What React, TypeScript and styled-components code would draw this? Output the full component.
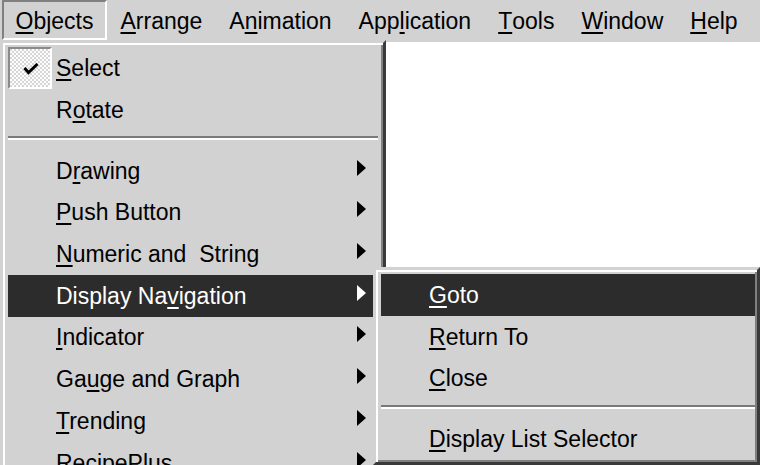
import React from "react";
import styled, { createGlobalStyle } from "styled-components";

const FACE = "#d2d2d2";
const HILITE = "#2c2c2c";

const GlobalStyle = createGlobalStyle`
  html, body {
    margin: 0;
    padding: 0;
    overflow: hidden;
    background: #fff;
  }
  body {
    font-family: "Liberation Sans", Arial, sans-serif;
  }
`;

// a label with its access key underlined, written as "Pre&fix"
const Label = ({ text }: { text: string }) => {
  const at = text.indexOf("&");
  if (at < 0) return <>{text}</>;
  return (
    <>
      {text.slice(0, at)}
      <Key>{text[at + 1]}</Key>
      {text.slice(at + 2)}
    </>
  );
};

type Item =
  | { kind: "item"; label: string; sub?: boolean; checked?: boolean; active?: boolean }
  | { kind: "sep" };

const titles = ["&Objects", "&Arrange", "A&nimation", "App&lication", "&Tools", "&Window", "&Help"];

const objectsMenu: Item[] = [
  { kind: "item", label: "&Select", checked: true },
  { kind: "item", label: "R&otate" },
  { kind: "sep" },
  { kind: "item", label: "D&rawing", sub: true },
  { kind: "item", label: "&Push Button", sub: true },
  { kind: "item", label: "&Numeric and  String", sub: true },
  { kind: "item", label: "Display Na&vigation", sub: true, active: true },
  { kind: "item", label: "&Indicator", sub: true },
  { kind: "item", label: "Ga&uge and Graph", sub: true },
  { kind: "item", label: "&Trending", sub: true },
  { kind: "item", label: "RecipePlus", sub: true },
];

const navigationMenu: Item[] = [
  { kind: "item", label: "&Goto", active: true },
  { kind: "item", label: "&Return To" },
  { kind: "item", label: "&Close" },
  { kind: "sep" },
  { kind: "item", label: "&Display List Selector" },
];

const MenuList = ({ items }: { items: Item[] }) => (
  <>
    {items.map((item, i) =>
      item.kind === "sep" ? (
        <Separator key={i} />
      ) : (
        <Row key={i} $active={!!item.active}>
          <IconCell>
            {item.checked && (
              <CheckBox>
                <svg width="16" height="12" viewBox="0 0 16 12">
                  <polyline
                    points="1.5,5 5.5,9.5 14.5,1"
                    fill="none"
                    stroke="#000"
                    strokeWidth="3"
                  />
                </svg>
              </CheckBox>
            )}
          </IconCell>
          <RowText>
            <Label text={item.label} />
          </RowText>
          <ArrowCell>{item.sub && <Arrow $active={!!item.active} />}</ArrowCell>
        </Row>
      )
    )}
  </>
);

export default function App() {
  return (
    <Screen>
      <GlobalStyle />
      <MenuBar>
        {titles.map((t, i) => (
          <MenuTitle key={t} $pressed={i === 0}>
            <Label text={t} />
          </MenuTitle>
        ))}
      </MenuBar>
      <Workspace />

      <Popup $left={0} $top={40} $width={386} $padRight={5} $padLeft={5}>
        <MenuList items={objectsMenu} />
      </Popup>

      <Popup $left={373} $top={267} $width={387} $padRight={2} $padLeft={5}>
        <MenuList items={navigationMenu} />
      </Popup>
    </Screen>
  );
}

const Screen = styled.div`
  position: relative;
  width: 760px;
  height: 465px;
  overflow: hidden;
  display: flex;
  flex-direction: column;
  background: #fff;
  font-size: 23px;
  color: #000;
`;

const MenuBar = styled.div`
  display: flex;
  align-items: stretch;
  height: 42px;
  padding-left: 2px;
  background: ${FACE};
`;

const MenuTitle = styled.div<{ $pressed: boolean }>`
  display: flex;
  align-items: center;
  padding: 3px 11.5px 0;
  height: 40px;
  box-sizing: border-box;
  border: 2px solid;
  border-color: ${(p) =>
    p.$pressed ? "#808080 #fff #fff #808080" : "transparent"};
  white-space: pre;
`;

const Workspace = styled.div`
  flex: 1;
  background: #fff;
`;

const Popup = styled.div<{
  $left: number;
  $top: number;
  $width: number;
  $padLeft: number;
  $padRight: number;
}>`
  position: absolute;
  left: ${(p) => p.$left}px;
  top: ${(p) => p.$top}px;
  width: ${(p) => p.$width}px;
  box-sizing: border-box;
  display: flex;
  flex-direction: column;
  background: ${FACE};
  border: 3px solid;
  border-color: ${FACE} #3a3a3a #3a3a3a ${FACE};
  box-shadow: inset 2px 2px #fff, inset -2px -2px #808080;
  padding: 4px ${(p) => p.$padRight}px 2px ${(p) => p.$padLeft}px;
`;

const Row = styled.div<{ $active: boolean }>`
  display: grid;
  grid-template-columns: 48px 1fr 21px;
  align-items: center;
  height: 41.7px;
  flex-shrink: 0;
  background: ${(p) => (p.$active ? HILITE : "transparent")};
  color: ${(p) => (p.$active ? "#fff" : "#000")};
`;

const IconCell = styled.div`
  height: 100%;
  display: flex;
  align-items: stretch;
`;

const CheckBox = styled.div`
  width: 44px;
  box-sizing: border-box;
  display: flex;
  align-items: center;
  justify-content: center;
  padding: 2px 0 0 2px;
  border: 2px solid;
  border-color: #8a8a8a #fff #fff #8a8a8a;
  background: repeating-conic-gradient(#fdfdfd 0 25%, #d6d6d6 0 50%) 0 0 / 4px 4px;
`;

const RowText = styled.span`
  white-space: pre;
  padding-top: 1px;
`;

const ArrowCell = styled.div`
  display: flex;
  align-items: center;
  padding-bottom: 6px;
`;

const Arrow = styled.span<{ $active: boolean }>`
  width: 0;
  height: 0;
  border-left: 9px solid ${(p) => (p.$active ? "#fff" : "#000")};
  border-top: 8px solid transparent;
  border-bottom: 8px solid transparent;
`;

const Separator = styled.div`
  height: 19.5px;
  flex-shrink: 0;
  box-sizing: border-box;
  padding-top: 6px;

  &::before {
    content: "";
    display: block;
    height: 2px;
    background: #7a7a7a;
    border-bottom: 2px solid #fff;
  }
`;

const Key = styled.span`
  text-decoration: underline;
  text-decoration-thickness: 2px;
  text-underline-offset: 3px;
`;
